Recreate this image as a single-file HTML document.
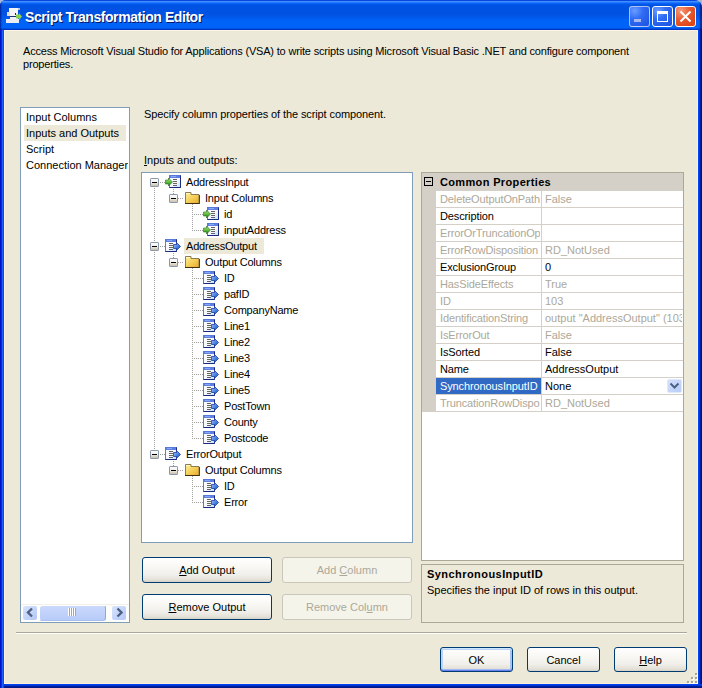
<!DOCTYPE html>
<html><head><meta charset="utf-8">
<style>
*{margin:0;padding:0;box-sizing:border-box}
html,body{width:702px;height:688px;overflow:hidden;background:#A7B6D6}
body{position:relative;font-family:"Liberation Sans",sans-serif;font-size:11px;color:#000}
.a{position:absolute}
.t{position:absolute;white-space:nowrap;line-height:13px}
#win{position:absolute;left:0;top:0;width:702px;height:688px;border-radius:6px 8px 0 0;overflow:hidden;
 background:linear-gradient(to right,#0014C8 0,#0014C8 1px,#0A2CD8 1px,#0A2CD8 2px,#1C62FA 2px,#1C62FA 3px,#0054DC 3px,#0054DC 4px)}
#title{position:absolute;left:0;top:0;width:702px;height:30px;background:linear-gradient(to bottom,#0A46DC 0px,#0A46DC 1px,#3C90FF 1px,#3C90FF 2px,#2478FF 2px,#2478FF 3px,#0A62F4 3px,#0A62F4 4px,#0058EA 4px,#0058EA 5px,#0053E2 5px,#0053E2 6px,#0053E2 6px,#0053E2 7px,#0053E2 7px,#0053E2 8px,#0053E2 8px,#0053E2 9px,#0053E2 9px,#0053E2 10px,#0053E2 10px,#0053E2 11px,#0053E2 11px,#0053E2 12px,#0053E2 12px,#0053E2 13px,#0053E2 13px,#0053E2 14px,#0053E2 14px,#0053E2 15px,#0055E4 15px,#0055E4 16px,#0057E8 16px,#0057E8 17px,#0059EC 17px,#0059EC 18px,#005CF0 18px,#005CF0 19px,#005FF4 19px,#005FF4 20px,#0063F8 20px,#0063F8 21px,#0063F8 21px,#0063F8 22px,#0063F8 22px,#0063F8 23px,#0063F8 23px,#0063F8 24px,#0063F8 24px,#0063F8 25px,#0063F8 25px,#0063F8 26px,#0063F8 26px,#0063F8 27px,#0063F8 27px,#0063F8 28px,#0052E4 28px,#0052E4 29px,#0038C4 29px,#0038C4 30px)}
#rb{position:absolute;left:698px;top:30px;width:4px;height:658px;background:linear-gradient(to right,#0044F0 0,#0044F0 1px,#0038D8 1px,#0038D8 2px,#001C98 2px,#001C98 3px,#001488 3px)}
#bb{position:absolute;left:4px;top:684px;width:698px;height:4px;background:linear-gradient(to bottom,#0040F0 0,#0040F0 1px,#0038D8 1px,#0038D8 2px,#001C98 2px,#001C98 3px,#001888 3px)}
#client{position:absolute;left:4px;top:30px;width:694px;height:654px;background:#ECE9D8;border-left:1px solid #FFF0E0;border-right:1px solid #FFF0D8;border-bottom:1px solid #FFF0D8;border-top:1px solid #FFF4E4}
.ttl{position:absolute;left:25px;top:9px;font-weight:bold;font-size:14px;letter-spacing:-0.43px;color:#fff;line-height:16px;text-shadow:1px 1px 0 #001468;white-space:nowrap}
.tb{position:absolute;top:6px;width:21px;height:21px;border:1px solid #fff;border-radius:3px;
 background:radial-gradient(circle at 25% 20%,#6A9CFF 0,#2F6CF4 40%,#1E50E0 100%)}
.btn{position:absolute;height:26px;border:1px solid #003C74;border-radius:3px;
 background:linear-gradient(to bottom,#FFFFFF 0,#F8F7F3 40%,#F0EFEA 70%,#E3E0D6 92%,#D6D0C5 100%);text-align:center;line-height:24px}
.btn.dis{border-color:#C9C7BA;background:#F5F4EA;color:#ACA899}
u{text-decoration:underline}
.lb{position:absolute;border:1px solid #7F9DB9;background:#fff}

</style></head><body>

<div id="win">
 <div id="title"></div>
 <div id="client"></div>
 <div id="rb"></div>
 <div id="bb"></div>
 <div class="a" style="left:0;top:0;width:2px;height:30px;background:linear-gradient(to right,rgba(0,10,120,0.55) 0,rgba(0,10,120,0.55) 1px,rgba(0,10,120,0.2) 1px,rgba(0,10,120,0.2) 2px)"></div>
 <div class="a" style="left:699px;top:0;width:3px;height:30px;background:linear-gradient(to right,rgba(0,10,120,0.15) 0,rgba(0,10,120,0.15) 1px,rgba(0,10,110,0.6) 1px)"></div>
</div>
<div class="ttl">Script Transformation Editor</div>
<svg class="a" style="left:0;top:0" width="30" height="30" viewBox="0 0 30 30">
 <rect x="9" y="8" width="9" height="8" fill="#F4F4F8"/>
 <rect x="7" y="12" width="3" height="4" fill="#E8D8D0"/>
 <rect x="18" y="8" width="2" height="2" fill="#B8C0D0"/>
 <rect x="10" y="16" width="8" height="3" fill="#F0F0F8"/>
 <rect x="10" y="16" width="6" height="1" fill="#203070"/>
 <rect x="6" y="19" width="13" height="4" fill="#ECECF4"/>
 <rect x="15" y="13" width="1" height="2" fill="#202840"/>
 <path d="M16 14.5 L19 14.5 L19 13 L22 16.5 L19 20 L19 18.5 L16 18.5 Z" fill="#8CD050"/>
</svg>
<div class="tb" style="left:629px;border-color:rgba(255,255,255,0.62)"></div>
<div class="tb" style="left:652px"></div>
<div class="tb" style="left:675px;background:radial-gradient(circle at 25% 20%,#F59C7C 0,#E8582E 45%,#D8400F 100%)"></div>
<div class="a" style="left:634px;top:19px;width:7px;height:3px;background:#A8B8EC"></div>
<div class="a" style="left:657px;top:11px;width:11px;height:11px;border:1px solid #fff;border-top-width:3px"></div>
<svg class="a" style="left:675px;top:6px" width="21" height="21" viewBox="0 0 21 21">
 <path d="M5.5 5.5 L15.5 15.5 M15.5 5.5 L5.5 15.5" stroke="#fff" stroke-width="2" stroke-linecap="butt"/>
</svg>

<div class="t" style="left:23px;top:45px;letter-spacing:-0.177px">Access Microsoft Visual Studio for Applications (VSA) to write scripts using Microsoft Visual Basic .NET and configure component</div>
<div class="t" style="left:23px;top:58px;letter-spacing:-0.177px">properties.</div>
<div class="lb" style="left:20px;top:107px;width:110px;height:516px"></div>
<div class="a" style="left:24px;top:125px;width:102px;height:16px;background:#ECE9D8"></div>
<div class="t" style="left:26px;top:111px;">Input Columns</div>
<div class="t" style="left:26px;top:127px;">Inputs and Outputs</div>
<div class="t" style="left:26px;top:143px;">Script</div>
<div class="t" style="left:26px;top:159px;width:102px;overflow:hidden">Connection Managers</div>
<div class="a" style="left:21px;top:604px;width:108px;height:18px;background:#FDFDFA;border-top:1px solid #F0EFE8"></div>
<div class="a" style="left:22px;top:605px;width:16px;height:16px;background:linear-gradient(135deg,#D8E4FC,#B4C8F8);border:1px solid #fff;border-radius:3px"></div>
<div class="a" style="left:39px;top:605px;width:67px;height:16px;background:linear-gradient(to bottom,#CAD8FC,#B8CCF8);border:1px solid #fff;border-right-color:#8CA8E0;border-bottom-color:#A8C0F0;border-radius:3px"></div>
<div class="a" style="left:111px;top:605px;width:16px;height:16px;background:linear-gradient(135deg,#D8E4FC,#B4C8F8);border:1px solid #fff;border-radius:3px"></div>
<svg class="a" style="left:0;top:600px" width="140" height="30" viewBox="0 0 140 30">
 <path d="M32 8.5 L28 12.5 L32 16.5" fill="none" stroke="#4D6185" stroke-width="2.4"/>
 <path d="M117.5 8.5 L121.5 12.5 L117.5 16.5" fill="none" stroke="#4D6185" stroke-width="2.4"/>
 <rect x="68" y="8" width="1" height="8" fill="#fff"/><rect x="69" y="8" width="1" height="8" fill="#8CA8E8"/>
 <rect x="70" y="8" width="1" height="8" fill="#fff"/><rect x="71" y="8" width="1" height="8" fill="#8CA8E8"/>
 <rect x="72" y="8" width="1" height="8" fill="#fff"/><rect x="73" y="8" width="1" height="8" fill="#8CA8E8"/>
 <rect x="74" y="8" width="1" height="8" fill="#fff"/><rect x="75" y="8" width="1" height="8" fill="#8CA8E8"/>
</svg>

<div class="t" style="left:144px;top:108px;letter-spacing:-0.1px">Specify column properties of the script component.</div>
<div class="t" style="left:144px;top:154px;"><u>I</u>nputs and outputs:</div>
<div class="lb" style="left:141px;top:172px;width:272px;height:371px"></div>
<svg class="a" style="left:0;top:0" width="702" height="688" viewBox="0 0 702 688">
<defs>
 <linearGradient id="boxg" x1="0" y1="0" x2="0" y2="1"><stop offset="0" stop-color="#fff"/><stop offset="0.45" stop-color="#F4F2EC"/><stop offset="1" stop-color="#C4B8A4"/></linearGradient>
 <linearGradient id="docg" x1="0" y1="0" x2="1" y2="1"><stop offset="0" stop-color="#fff"/><stop offset="0.6" stop-color="#F4F6FC"/><stop offset="1" stop-color="#B8E0F8"/></linearGradient>
 <linearGradient id="fold" x1="0" y1="0" x2="1" y2="1"><stop offset="0" stop-color="#FAF0A0"/><stop offset="0.5" stop-color="#F6D058"/><stop offset="1" stop-color="#EAA828"/></linearGradient>
 <linearGradient id="grn" x1="0" y1="0" x2="0" y2="1"><stop offset="0" stop-color="#B8F090"/><stop offset="0.5" stop-color="#60C040"/><stop offset="1" stop-color="#207018"/></linearGradient>
 <linearGradient id="blu" x1="0" y1="0" x2="1" y2="1"><stop offset="0" stop-color="#A8C8FC"/><stop offset="0.5" stop-color="#5088E8"/><stop offset="1" stop-color="#1840B0"/></linearGradient>
 <g id="box"><rect x="0.5" y="0.5" width="8" height="8" rx="0.6" fill="url(#boxg)" stroke="#8898A8"/><rect x="2" y="4" width="5" height="1" fill="#000"/></g>
 <g id="doc"><rect x="0.5" y="1.5" width="11" height="12" fill="url(#docg)" stroke="#5A78D8"/><path d="M11.5 1.5 V13.5 H0.5" fill="none" stroke="#1C2A80"/><rect x="1" y="2" width="10" height="2" fill="#5C80E4"/><rect x="2" y="2" width="5" height="1" fill="#8CA8F0"/>
  <rect x="4" y="5" width="4" height="1" fill="#606060"/><rect x="4" y="7" width="4" height="1" fill="#686858"/><rect x="4" y="9" width="4" height="1" fill="#686858"/><rect x="4" y="11" width="4" height="1" fill="#606070"/></g>
 <g id="out"><use href="#doc"/>
  <path d="M8.5 6.5 H11.5 V4.5 L15.5 8.5 L11.5 12.5 V10.5 H8.5 Z" fill="url(#blu)" stroke="#2040A8" stroke-width="0.8"/></g>
 <g id="in"><use href="#doc" x="4"/>
  <path d="M0.5 6 H3.5 V4 L7.5 8 L3.5 12 V10 H0.5 Z" fill="url(#grn)" stroke="#2A6A20" stroke-width="0.6"/></g>
 <g id="folder"><path d="M1.5 2.5 H7 V4.5 H15 V13.5 H1.5 Z" fill="url(#fold)" stroke="#8C7C50"/><rect x="1" y="13" width="15" height="1" fill="#3C3010"/><rect x="15" y="5" width="1" height="9" fill="#584820"/><rect x="2" y="3" width="4" height="1" fill="#FFF8D0"/></g>
</defs>

<rect x="184" y="238" width="80" height="16" fill="#ECE9D8"/>
<rect x="154" y="188" width="1" height="1" fill="#A0A0A0"/>
<rect x="154" y="190" width="1" height="1" fill="#A0A0A0"/>
<rect x="154" y="192" width="1" height="1" fill="#A0A0A0"/>
<rect x="154" y="194" width="1" height="1" fill="#A0A0A0"/>
<rect x="154" y="196" width="1" height="1" fill="#A0A0A0"/>
<rect x="154" y="198" width="1" height="1" fill="#A0A0A0"/>
<rect x="154" y="200" width="1" height="1" fill="#A0A0A0"/>
<rect x="154" y="202" width="1" height="1" fill="#A0A0A0"/>
<rect x="154" y="204" width="1" height="1" fill="#A0A0A0"/>
<rect x="154" y="206" width="1" height="1" fill="#A0A0A0"/>
<rect x="154" y="208" width="1" height="1" fill="#A0A0A0"/>
<rect x="154" y="210" width="1" height="1" fill="#A0A0A0"/>
<rect x="154" y="212" width="1" height="1" fill="#A0A0A0"/>
<rect x="154" y="214" width="1" height="1" fill="#A0A0A0"/>
<rect x="154" y="216" width="1" height="1" fill="#A0A0A0"/>
<rect x="154" y="218" width="1" height="1" fill="#A0A0A0"/>
<rect x="154" y="220" width="1" height="1" fill="#A0A0A0"/>
<rect x="154" y="222" width="1" height="1" fill="#A0A0A0"/>
<rect x="154" y="224" width="1" height="1" fill="#A0A0A0"/>
<rect x="154" y="226" width="1" height="1" fill="#A0A0A0"/>
<rect x="154" y="228" width="1" height="1" fill="#A0A0A0"/>
<rect x="154" y="230" width="1" height="1" fill="#A0A0A0"/>
<rect x="154" y="232" width="1" height="1" fill="#A0A0A0"/>
<rect x="154" y="234" width="1" height="1" fill="#A0A0A0"/>
<rect x="154" y="236" width="1" height="1" fill="#A0A0A0"/>
<rect x="154" y="238" width="1" height="1" fill="#A0A0A0"/>
<rect x="154" y="240" width="1" height="1" fill="#A0A0A0"/>
<rect x="154" y="242" width="1" height="1" fill="#A0A0A0"/>
<rect x="154" y="244" width="1" height="1" fill="#A0A0A0"/>
<rect x="154" y="246" width="1" height="1" fill="#A0A0A0"/>
<rect x="154" y="248" width="1" height="1" fill="#A0A0A0"/>
<rect x="154" y="250" width="1" height="1" fill="#A0A0A0"/>
<rect x="154" y="252" width="1" height="1" fill="#A0A0A0"/>
<rect x="154" y="254" width="1" height="1" fill="#A0A0A0"/>
<rect x="154" y="256" width="1" height="1" fill="#A0A0A0"/>
<rect x="154" y="258" width="1" height="1" fill="#A0A0A0"/>
<rect x="154" y="260" width="1" height="1" fill="#A0A0A0"/>
<rect x="154" y="262" width="1" height="1" fill="#A0A0A0"/>
<rect x="154" y="264" width="1" height="1" fill="#A0A0A0"/>
<rect x="154" y="266" width="1" height="1" fill="#A0A0A0"/>
<rect x="154" y="268" width="1" height="1" fill="#A0A0A0"/>
<rect x="154" y="270" width="1" height="1" fill="#A0A0A0"/>
<rect x="154" y="272" width="1" height="1" fill="#A0A0A0"/>
<rect x="154" y="274" width="1" height="1" fill="#A0A0A0"/>
<rect x="154" y="276" width="1" height="1" fill="#A0A0A0"/>
<rect x="154" y="278" width="1" height="1" fill="#A0A0A0"/>
<rect x="154" y="280" width="1" height="1" fill="#A0A0A0"/>
<rect x="154" y="282" width="1" height="1" fill="#A0A0A0"/>
<rect x="154" y="284" width="1" height="1" fill="#A0A0A0"/>
<rect x="154" y="286" width="1" height="1" fill="#A0A0A0"/>
<rect x="154" y="288" width="1" height="1" fill="#A0A0A0"/>
<rect x="154" y="290" width="1" height="1" fill="#A0A0A0"/>
<rect x="154" y="292" width="1" height="1" fill="#A0A0A0"/>
<rect x="154" y="294" width="1" height="1" fill="#A0A0A0"/>
<rect x="154" y="296" width="1" height="1" fill="#A0A0A0"/>
<rect x="154" y="298" width="1" height="1" fill="#A0A0A0"/>
<rect x="154" y="300" width="1" height="1" fill="#A0A0A0"/>
<rect x="154" y="302" width="1" height="1" fill="#A0A0A0"/>
<rect x="154" y="304" width="1" height="1" fill="#A0A0A0"/>
<rect x="154" y="306" width="1" height="1" fill="#A0A0A0"/>
<rect x="154" y="308" width="1" height="1" fill="#A0A0A0"/>
<rect x="154" y="310" width="1" height="1" fill="#A0A0A0"/>
<rect x="154" y="312" width="1" height="1" fill="#A0A0A0"/>
<rect x="154" y="314" width="1" height="1" fill="#A0A0A0"/>
<rect x="154" y="316" width="1" height="1" fill="#A0A0A0"/>
<rect x="154" y="318" width="1" height="1" fill="#A0A0A0"/>
<rect x="154" y="320" width="1" height="1" fill="#A0A0A0"/>
<rect x="154" y="322" width="1" height="1" fill="#A0A0A0"/>
<rect x="154" y="324" width="1" height="1" fill="#A0A0A0"/>
<rect x="154" y="326" width="1" height="1" fill="#A0A0A0"/>
<rect x="154" y="328" width="1" height="1" fill="#A0A0A0"/>
<rect x="154" y="330" width="1" height="1" fill="#A0A0A0"/>
<rect x="154" y="332" width="1" height="1" fill="#A0A0A0"/>
<rect x="154" y="334" width="1" height="1" fill="#A0A0A0"/>
<rect x="154" y="336" width="1" height="1" fill="#A0A0A0"/>
<rect x="154" y="338" width="1" height="1" fill="#A0A0A0"/>
<rect x="154" y="340" width="1" height="1" fill="#A0A0A0"/>
<rect x="154" y="342" width="1" height="1" fill="#A0A0A0"/>
<rect x="154" y="344" width="1" height="1" fill="#A0A0A0"/>
<rect x="154" y="346" width="1" height="1" fill="#A0A0A0"/>
<rect x="154" y="348" width="1" height="1" fill="#A0A0A0"/>
<rect x="154" y="350" width="1" height="1" fill="#A0A0A0"/>
<rect x="154" y="352" width="1" height="1" fill="#A0A0A0"/>
<rect x="154" y="354" width="1" height="1" fill="#A0A0A0"/>
<rect x="154" y="356" width="1" height="1" fill="#A0A0A0"/>
<rect x="154" y="358" width="1" height="1" fill="#A0A0A0"/>
<rect x="154" y="360" width="1" height="1" fill="#A0A0A0"/>
<rect x="154" y="362" width="1" height="1" fill="#A0A0A0"/>
<rect x="154" y="364" width="1" height="1" fill="#A0A0A0"/>
<rect x="154" y="366" width="1" height="1" fill="#A0A0A0"/>
<rect x="154" y="368" width="1" height="1" fill="#A0A0A0"/>
<rect x="154" y="370" width="1" height="1" fill="#A0A0A0"/>
<rect x="154" y="372" width="1" height="1" fill="#A0A0A0"/>
<rect x="154" y="374" width="1" height="1" fill="#A0A0A0"/>
<rect x="154" y="376" width="1" height="1" fill="#A0A0A0"/>
<rect x="154" y="378" width="1" height="1" fill="#A0A0A0"/>
<rect x="154" y="380" width="1" height="1" fill="#A0A0A0"/>
<rect x="154" y="382" width="1" height="1" fill="#A0A0A0"/>
<rect x="154" y="384" width="1" height="1" fill="#A0A0A0"/>
<rect x="154" y="386" width="1" height="1" fill="#A0A0A0"/>
<rect x="154" y="388" width="1" height="1" fill="#A0A0A0"/>
<rect x="154" y="390" width="1" height="1" fill="#A0A0A0"/>
<rect x="154" y="392" width="1" height="1" fill="#A0A0A0"/>
<rect x="154" y="394" width="1" height="1" fill="#A0A0A0"/>
<rect x="154" y="396" width="1" height="1" fill="#A0A0A0"/>
<rect x="154" y="398" width="1" height="1" fill="#A0A0A0"/>
<rect x="154" y="400" width="1" height="1" fill="#A0A0A0"/>
<rect x="154" y="402" width="1" height="1" fill="#A0A0A0"/>
<rect x="154" y="404" width="1" height="1" fill="#A0A0A0"/>
<rect x="154" y="406" width="1" height="1" fill="#A0A0A0"/>
<rect x="154" y="408" width="1" height="1" fill="#A0A0A0"/>
<rect x="154" y="410" width="1" height="1" fill="#A0A0A0"/>
<rect x="154" y="412" width="1" height="1" fill="#A0A0A0"/>
<rect x="154" y="414" width="1" height="1" fill="#A0A0A0"/>
<rect x="154" y="416" width="1" height="1" fill="#A0A0A0"/>
<rect x="154" y="418" width="1" height="1" fill="#A0A0A0"/>
<rect x="154" y="420" width="1" height="1" fill="#A0A0A0"/>
<rect x="154" y="422" width="1" height="1" fill="#A0A0A0"/>
<rect x="154" y="424" width="1" height="1" fill="#A0A0A0"/>
<rect x="154" y="426" width="1" height="1" fill="#A0A0A0"/>
<rect x="154" y="428" width="1" height="1" fill="#A0A0A0"/>
<rect x="154" y="430" width="1" height="1" fill="#A0A0A0"/>
<rect x="154" y="432" width="1" height="1" fill="#A0A0A0"/>
<rect x="154" y="434" width="1" height="1" fill="#A0A0A0"/>
<rect x="154" y="436" width="1" height="1" fill="#A0A0A0"/>
<rect x="154" y="438" width="1" height="1" fill="#A0A0A0"/>
<rect x="154" y="440" width="1" height="1" fill="#A0A0A0"/>
<rect x="154" y="442" width="1" height="1" fill="#A0A0A0"/>
<rect x="154" y="444" width="1" height="1" fill="#A0A0A0"/>
<rect x="154" y="446" width="1" height="1" fill="#A0A0A0"/>
<rect x="154" y="448" width="1" height="1" fill="#A0A0A0"/>
<rect x="173" y="189" width="1" height="1" fill="#A0A0A0"/>
<rect x="173" y="191" width="1" height="1" fill="#A0A0A0"/>
<rect x="173" y="193" width="1" height="1" fill="#A0A0A0"/>
<rect x="192" y="204" width="1" height="1" fill="#A0A0A0"/>
<rect x="192" y="206" width="1" height="1" fill="#A0A0A0"/>
<rect x="192" y="208" width="1" height="1" fill="#A0A0A0"/>
<rect x="192" y="210" width="1" height="1" fill="#A0A0A0"/>
<rect x="192" y="212" width="1" height="1" fill="#A0A0A0"/>
<rect x="192" y="214" width="1" height="1" fill="#A0A0A0"/>
<rect x="192" y="216" width="1" height="1" fill="#A0A0A0"/>
<rect x="192" y="218" width="1" height="1" fill="#A0A0A0"/>
<rect x="192" y="220" width="1" height="1" fill="#A0A0A0"/>
<rect x="192" y="222" width="1" height="1" fill="#A0A0A0"/>
<rect x="192" y="224" width="1" height="1" fill="#A0A0A0"/>
<rect x="192" y="226" width="1" height="1" fill="#A0A0A0"/>
<rect x="192" y="228" width="1" height="1" fill="#A0A0A0"/>
<rect x="192" y="230" width="1" height="1" fill="#A0A0A0"/>
<rect x="173" y="253" width="1" height="1" fill="#A0A0A0"/>
<rect x="173" y="255" width="1" height="1" fill="#A0A0A0"/>
<rect x="173" y="257" width="1" height="1" fill="#A0A0A0"/>
<rect x="192" y="268" width="1" height="1" fill="#A0A0A0"/>
<rect x="192" y="270" width="1" height="1" fill="#A0A0A0"/>
<rect x="192" y="272" width="1" height="1" fill="#A0A0A0"/>
<rect x="192" y="274" width="1" height="1" fill="#A0A0A0"/>
<rect x="192" y="276" width="1" height="1" fill="#A0A0A0"/>
<rect x="192" y="278" width="1" height="1" fill="#A0A0A0"/>
<rect x="192" y="280" width="1" height="1" fill="#A0A0A0"/>
<rect x="192" y="282" width="1" height="1" fill="#A0A0A0"/>
<rect x="192" y="284" width="1" height="1" fill="#A0A0A0"/>
<rect x="192" y="286" width="1" height="1" fill="#A0A0A0"/>
<rect x="192" y="288" width="1" height="1" fill="#A0A0A0"/>
<rect x="192" y="290" width="1" height="1" fill="#A0A0A0"/>
<rect x="192" y="292" width="1" height="1" fill="#A0A0A0"/>
<rect x="192" y="294" width="1" height="1" fill="#A0A0A0"/>
<rect x="192" y="296" width="1" height="1" fill="#A0A0A0"/>
<rect x="192" y="298" width="1" height="1" fill="#A0A0A0"/>
<rect x="192" y="300" width="1" height="1" fill="#A0A0A0"/>
<rect x="192" y="302" width="1" height="1" fill="#A0A0A0"/>
<rect x="192" y="304" width="1" height="1" fill="#A0A0A0"/>
<rect x="192" y="306" width="1" height="1" fill="#A0A0A0"/>
<rect x="192" y="308" width="1" height="1" fill="#A0A0A0"/>
<rect x="192" y="310" width="1" height="1" fill="#A0A0A0"/>
<rect x="192" y="312" width="1" height="1" fill="#A0A0A0"/>
<rect x="192" y="314" width="1" height="1" fill="#A0A0A0"/>
<rect x="192" y="316" width="1" height="1" fill="#A0A0A0"/>
<rect x="192" y="318" width="1" height="1" fill="#A0A0A0"/>
<rect x="192" y="320" width="1" height="1" fill="#A0A0A0"/>
<rect x="192" y="322" width="1" height="1" fill="#A0A0A0"/>
<rect x="192" y="324" width="1" height="1" fill="#A0A0A0"/>
<rect x="192" y="326" width="1" height="1" fill="#A0A0A0"/>
<rect x="192" y="328" width="1" height="1" fill="#A0A0A0"/>
<rect x="192" y="330" width="1" height="1" fill="#A0A0A0"/>
<rect x="192" y="332" width="1" height="1" fill="#A0A0A0"/>
<rect x="192" y="334" width="1" height="1" fill="#A0A0A0"/>
<rect x="192" y="336" width="1" height="1" fill="#A0A0A0"/>
<rect x="192" y="338" width="1" height="1" fill="#A0A0A0"/>
<rect x="192" y="340" width="1" height="1" fill="#A0A0A0"/>
<rect x="192" y="342" width="1" height="1" fill="#A0A0A0"/>
<rect x="192" y="344" width="1" height="1" fill="#A0A0A0"/>
<rect x="192" y="346" width="1" height="1" fill="#A0A0A0"/>
<rect x="192" y="348" width="1" height="1" fill="#A0A0A0"/>
<rect x="192" y="350" width="1" height="1" fill="#A0A0A0"/>
<rect x="192" y="352" width="1" height="1" fill="#A0A0A0"/>
<rect x="192" y="354" width="1" height="1" fill="#A0A0A0"/>
<rect x="192" y="356" width="1" height="1" fill="#A0A0A0"/>
<rect x="192" y="358" width="1" height="1" fill="#A0A0A0"/>
<rect x="192" y="360" width="1" height="1" fill="#A0A0A0"/>
<rect x="192" y="362" width="1" height="1" fill="#A0A0A0"/>
<rect x="192" y="364" width="1" height="1" fill="#A0A0A0"/>
<rect x="192" y="366" width="1" height="1" fill="#A0A0A0"/>
<rect x="192" y="368" width="1" height="1" fill="#A0A0A0"/>
<rect x="192" y="370" width="1" height="1" fill="#A0A0A0"/>
<rect x="192" y="372" width="1" height="1" fill="#A0A0A0"/>
<rect x="192" y="374" width="1" height="1" fill="#A0A0A0"/>
<rect x="192" y="376" width="1" height="1" fill="#A0A0A0"/>
<rect x="192" y="378" width="1" height="1" fill="#A0A0A0"/>
<rect x="192" y="380" width="1" height="1" fill="#A0A0A0"/>
<rect x="192" y="382" width="1" height="1" fill="#A0A0A0"/>
<rect x="192" y="384" width="1" height="1" fill="#A0A0A0"/>
<rect x="192" y="386" width="1" height="1" fill="#A0A0A0"/>
<rect x="192" y="388" width="1" height="1" fill="#A0A0A0"/>
<rect x="192" y="390" width="1" height="1" fill="#A0A0A0"/>
<rect x="192" y="392" width="1" height="1" fill="#A0A0A0"/>
<rect x="192" y="394" width="1" height="1" fill="#A0A0A0"/>
<rect x="192" y="396" width="1" height="1" fill="#A0A0A0"/>
<rect x="192" y="398" width="1" height="1" fill="#A0A0A0"/>
<rect x="192" y="400" width="1" height="1" fill="#A0A0A0"/>
<rect x="192" y="402" width="1" height="1" fill="#A0A0A0"/>
<rect x="192" y="404" width="1" height="1" fill="#A0A0A0"/>
<rect x="192" y="406" width="1" height="1" fill="#A0A0A0"/>
<rect x="192" y="408" width="1" height="1" fill="#A0A0A0"/>
<rect x="192" y="410" width="1" height="1" fill="#A0A0A0"/>
<rect x="192" y="412" width="1" height="1" fill="#A0A0A0"/>
<rect x="192" y="414" width="1" height="1" fill="#A0A0A0"/>
<rect x="192" y="416" width="1" height="1" fill="#A0A0A0"/>
<rect x="192" y="418" width="1" height="1" fill="#A0A0A0"/>
<rect x="192" y="420" width="1" height="1" fill="#A0A0A0"/>
<rect x="192" y="422" width="1" height="1" fill="#A0A0A0"/>
<rect x="192" y="424" width="1" height="1" fill="#A0A0A0"/>
<rect x="192" y="426" width="1" height="1" fill="#A0A0A0"/>
<rect x="192" y="428" width="1" height="1" fill="#A0A0A0"/>
<rect x="192" y="430" width="1" height="1" fill="#A0A0A0"/>
<rect x="192" y="432" width="1" height="1" fill="#A0A0A0"/>
<rect x="192" y="434" width="1" height="1" fill="#A0A0A0"/>
<rect x="192" y="436" width="1" height="1" fill="#A0A0A0"/>
<rect x="192" y="438" width="1" height="1" fill="#A0A0A0"/>
<rect x="173" y="461" width="1" height="1" fill="#A0A0A0"/>
<rect x="173" y="463" width="1" height="1" fill="#A0A0A0"/>
<rect x="173" y="465" width="1" height="1" fill="#A0A0A0"/>
<rect x="192" y="476" width="1" height="1" fill="#A0A0A0"/>
<rect x="192" y="478" width="1" height="1" fill="#A0A0A0"/>
<rect x="192" y="480" width="1" height="1" fill="#A0A0A0"/>
<rect x="192" y="482" width="1" height="1" fill="#A0A0A0"/>
<rect x="192" y="484" width="1" height="1" fill="#A0A0A0"/>
<rect x="192" y="486" width="1" height="1" fill="#A0A0A0"/>
<rect x="192" y="488" width="1" height="1" fill="#A0A0A0"/>
<rect x="192" y="490" width="1" height="1" fill="#A0A0A0"/>
<rect x="192" y="492" width="1" height="1" fill="#A0A0A0"/>
<rect x="192" y="494" width="1" height="1" fill="#A0A0A0"/>
<rect x="192" y="496" width="1" height="1" fill="#A0A0A0"/>
<rect x="192" y="498" width="1" height="1" fill="#A0A0A0"/>
<rect x="192" y="500" width="1" height="1" fill="#A0A0A0"/>
<rect x="192" y="502" width="1" height="1" fill="#A0A0A0"/>
<rect x="160" y="182" width="1" height="1" fill="#A0A0A0"/>
<rect x="162" y="182" width="1" height="1" fill="#A0A0A0"/>
<rect x="164" y="182" width="1" height="1" fill="#A0A0A0"/>
<use href="#box" x="150" y="178"/>
<use href="#in" x="165" y="174"/>
<rect x="178" y="198" width="1" height="1" fill="#A0A0A0"/>
<rect x="180" y="198" width="1" height="1" fill="#A0A0A0"/>
<rect x="182" y="198" width="1" height="1" fill="#A0A0A0"/>
<use href="#box" x="169" y="194"/>
<use href="#folder" x="184" y="190"/>
<rect x="192" y="214" width="1" height="1" fill="#A0A0A0"/>
<rect x="194" y="214" width="1" height="1" fill="#A0A0A0"/>
<rect x="196" y="214" width="1" height="1" fill="#A0A0A0"/>
<rect x="198" y="214" width="1" height="1" fill="#A0A0A0"/>
<rect x="200" y="214" width="1" height="1" fill="#A0A0A0"/>
<rect x="202" y="214" width="1" height="1" fill="#A0A0A0"/>
<use href="#in" x="203" y="206"/>
<rect x="192" y="230" width="1" height="1" fill="#A0A0A0"/>
<rect x="194" y="230" width="1" height="1" fill="#A0A0A0"/>
<rect x="196" y="230" width="1" height="1" fill="#A0A0A0"/>
<rect x="198" y="230" width="1" height="1" fill="#A0A0A0"/>
<rect x="200" y="230" width="1" height="1" fill="#A0A0A0"/>
<rect x="202" y="230" width="1" height="1" fill="#A0A0A0"/>
<use href="#in" x="203" y="222"/>
<rect x="160" y="246" width="1" height="1" fill="#A0A0A0"/>
<rect x="162" y="246" width="1" height="1" fill="#A0A0A0"/>
<rect x="164" y="246" width="1" height="1" fill="#A0A0A0"/>
<use href="#box" x="150" y="242"/>
<use href="#out" x="165" y="238"/>
<rect x="178" y="262" width="1" height="1" fill="#A0A0A0"/>
<rect x="180" y="262" width="1" height="1" fill="#A0A0A0"/>
<rect x="182" y="262" width="1" height="1" fill="#A0A0A0"/>
<use href="#box" x="169" y="258"/>
<use href="#folder" x="184" y="254"/>
<rect x="192" y="278" width="1" height="1" fill="#A0A0A0"/>
<rect x="194" y="278" width="1" height="1" fill="#A0A0A0"/>
<rect x="196" y="278" width="1" height="1" fill="#A0A0A0"/>
<rect x="198" y="278" width="1" height="1" fill="#A0A0A0"/>
<rect x="200" y="278" width="1" height="1" fill="#A0A0A0"/>
<rect x="202" y="278" width="1" height="1" fill="#A0A0A0"/>
<use href="#out" x="203" y="270"/>
<rect x="192" y="294" width="1" height="1" fill="#A0A0A0"/>
<rect x="194" y="294" width="1" height="1" fill="#A0A0A0"/>
<rect x="196" y="294" width="1" height="1" fill="#A0A0A0"/>
<rect x="198" y="294" width="1" height="1" fill="#A0A0A0"/>
<rect x="200" y="294" width="1" height="1" fill="#A0A0A0"/>
<rect x="202" y="294" width="1" height="1" fill="#A0A0A0"/>
<use href="#out" x="203" y="286"/>
<rect x="192" y="310" width="1" height="1" fill="#A0A0A0"/>
<rect x="194" y="310" width="1" height="1" fill="#A0A0A0"/>
<rect x="196" y="310" width="1" height="1" fill="#A0A0A0"/>
<rect x="198" y="310" width="1" height="1" fill="#A0A0A0"/>
<rect x="200" y="310" width="1" height="1" fill="#A0A0A0"/>
<rect x="202" y="310" width="1" height="1" fill="#A0A0A0"/>
<use href="#out" x="203" y="302"/>
<rect x="192" y="326" width="1" height="1" fill="#A0A0A0"/>
<rect x="194" y="326" width="1" height="1" fill="#A0A0A0"/>
<rect x="196" y="326" width="1" height="1" fill="#A0A0A0"/>
<rect x="198" y="326" width="1" height="1" fill="#A0A0A0"/>
<rect x="200" y="326" width="1" height="1" fill="#A0A0A0"/>
<rect x="202" y="326" width="1" height="1" fill="#A0A0A0"/>
<use href="#out" x="203" y="318"/>
<rect x="192" y="342" width="1" height="1" fill="#A0A0A0"/>
<rect x="194" y="342" width="1" height="1" fill="#A0A0A0"/>
<rect x="196" y="342" width="1" height="1" fill="#A0A0A0"/>
<rect x="198" y="342" width="1" height="1" fill="#A0A0A0"/>
<rect x="200" y="342" width="1" height="1" fill="#A0A0A0"/>
<rect x="202" y="342" width="1" height="1" fill="#A0A0A0"/>
<use href="#out" x="203" y="334"/>
<rect x="192" y="358" width="1" height="1" fill="#A0A0A0"/>
<rect x="194" y="358" width="1" height="1" fill="#A0A0A0"/>
<rect x="196" y="358" width="1" height="1" fill="#A0A0A0"/>
<rect x="198" y="358" width="1" height="1" fill="#A0A0A0"/>
<rect x="200" y="358" width="1" height="1" fill="#A0A0A0"/>
<rect x="202" y="358" width="1" height="1" fill="#A0A0A0"/>
<use href="#out" x="203" y="350"/>
<rect x="192" y="374" width="1" height="1" fill="#A0A0A0"/>
<rect x="194" y="374" width="1" height="1" fill="#A0A0A0"/>
<rect x="196" y="374" width="1" height="1" fill="#A0A0A0"/>
<rect x="198" y="374" width="1" height="1" fill="#A0A0A0"/>
<rect x="200" y="374" width="1" height="1" fill="#A0A0A0"/>
<rect x="202" y="374" width="1" height="1" fill="#A0A0A0"/>
<use href="#out" x="203" y="366"/>
<rect x="192" y="390" width="1" height="1" fill="#A0A0A0"/>
<rect x="194" y="390" width="1" height="1" fill="#A0A0A0"/>
<rect x="196" y="390" width="1" height="1" fill="#A0A0A0"/>
<rect x="198" y="390" width="1" height="1" fill="#A0A0A0"/>
<rect x="200" y="390" width="1" height="1" fill="#A0A0A0"/>
<rect x="202" y="390" width="1" height="1" fill="#A0A0A0"/>
<use href="#out" x="203" y="382"/>
<rect x="192" y="406" width="1" height="1" fill="#A0A0A0"/>
<rect x="194" y="406" width="1" height="1" fill="#A0A0A0"/>
<rect x="196" y="406" width="1" height="1" fill="#A0A0A0"/>
<rect x="198" y="406" width="1" height="1" fill="#A0A0A0"/>
<rect x="200" y="406" width="1" height="1" fill="#A0A0A0"/>
<rect x="202" y="406" width="1" height="1" fill="#A0A0A0"/>
<use href="#out" x="203" y="398"/>
<rect x="192" y="422" width="1" height="1" fill="#A0A0A0"/>
<rect x="194" y="422" width="1" height="1" fill="#A0A0A0"/>
<rect x="196" y="422" width="1" height="1" fill="#A0A0A0"/>
<rect x="198" y="422" width="1" height="1" fill="#A0A0A0"/>
<rect x="200" y="422" width="1" height="1" fill="#A0A0A0"/>
<rect x="202" y="422" width="1" height="1" fill="#A0A0A0"/>
<use href="#out" x="203" y="414"/>
<rect x="192" y="438" width="1" height="1" fill="#A0A0A0"/>
<rect x="194" y="438" width="1" height="1" fill="#A0A0A0"/>
<rect x="196" y="438" width="1" height="1" fill="#A0A0A0"/>
<rect x="198" y="438" width="1" height="1" fill="#A0A0A0"/>
<rect x="200" y="438" width="1" height="1" fill="#A0A0A0"/>
<rect x="202" y="438" width="1" height="1" fill="#A0A0A0"/>
<use href="#out" x="203" y="430"/>
<rect x="160" y="454" width="1" height="1" fill="#A0A0A0"/>
<rect x="162" y="454" width="1" height="1" fill="#A0A0A0"/>
<rect x="164" y="454" width="1" height="1" fill="#A0A0A0"/>
<use href="#box" x="150" y="450"/>
<use href="#out" x="165" y="446"/>
<rect x="178" y="470" width="1" height="1" fill="#A0A0A0"/>
<rect x="180" y="470" width="1" height="1" fill="#A0A0A0"/>
<rect x="182" y="470" width="1" height="1" fill="#A0A0A0"/>
<use href="#box" x="169" y="466"/>
<use href="#folder" x="184" y="462"/>
<rect x="192" y="486" width="1" height="1" fill="#A0A0A0"/>
<rect x="194" y="486" width="1" height="1" fill="#A0A0A0"/>
<rect x="196" y="486" width="1" height="1" fill="#A0A0A0"/>
<rect x="198" y="486" width="1" height="1" fill="#A0A0A0"/>
<rect x="200" y="486" width="1" height="1" fill="#A0A0A0"/>
<rect x="202" y="486" width="1" height="1" fill="#A0A0A0"/>
<use href="#out" x="203" y="478"/>
<rect x="192" y="502" width="1" height="1" fill="#A0A0A0"/>
<rect x="194" y="502" width="1" height="1" fill="#A0A0A0"/>
<rect x="196" y="502" width="1" height="1" fill="#A0A0A0"/>
<rect x="198" y="502" width="1" height="1" fill="#A0A0A0"/>
<rect x="200" y="502" width="1" height="1" fill="#A0A0A0"/>
<rect x="202" y="502" width="1" height="1" fill="#A0A0A0"/>
<use href="#out" x="203" y="494"/>
</svg>
<div class="t" style="left:186px;top:176px;letter-spacing:-0.2px">AddressInput</div>
<div class="t" style="left:205px;top:192px;letter-spacing:-0.2px">Input Columns</div>
<div class="t" style="left:224px;top:208px;letter-spacing:-0.2px">id</div>
<div class="t" style="left:224px;top:224px;letter-spacing:-0.2px">inputAddress</div>
<div class="t" style="left:186px;top:240px;letter-spacing:-0.2px">AddressOutput</div>
<div class="t" style="left:205px;top:256px;letter-spacing:-0.2px">Output Columns</div>
<div class="t" style="left:224px;top:272px;letter-spacing:-0.2px">ID</div>
<div class="t" style="left:224px;top:288px;letter-spacing:-0.2px">pafID</div>
<div class="t" style="left:224px;top:304px;letter-spacing:-0.2px">CompanyName</div>
<div class="t" style="left:224px;top:320px;letter-spacing:-0.2px">Line1</div>
<div class="t" style="left:224px;top:336px;letter-spacing:-0.2px">Line2</div>
<div class="t" style="left:224px;top:352px;letter-spacing:-0.2px">Line3</div>
<div class="t" style="left:224px;top:368px;letter-spacing:-0.2px">Line4</div>
<div class="t" style="left:224px;top:384px;letter-spacing:-0.2px">Line5</div>
<div class="t" style="left:224px;top:400px;letter-spacing:-0.2px">PostTown</div>
<div class="t" style="left:224px;top:416px;letter-spacing:-0.2px">County</div>
<div class="t" style="left:224px;top:432px;letter-spacing:-0.2px">Postcode</div>
<div class="t" style="left:186px;top:448px;letter-spacing:-0.2px">ErrorOutput</div>
<div class="t" style="left:205px;top:464px;letter-spacing:-0.2px">Output Columns</div>
<div class="t" style="left:224px;top:480px;letter-spacing:-0.2px">ID</div>
<div class="t" style="left:224px;top:496px;letter-spacing:-0.2px">Error</div>
<div class="a" style="left:421px;top:172px;width:263px;height:389px;border:1px solid #ACA899;background:#fff"></div>
<div class="a" style="left:422px;top:173px;width:261px;height:18px;background:#D4D0C8"></div>
<div class="a" style="left:422px;top:191px;width:14px;height:221px;background:#D4D0C8"></div>
<div class="a" style="left:424px;top:177px;width:9px;height:9px;border:1px solid #000"></div>
<div class="a" style="left:426px;top:181px;width:5px;height:1px;background:#000"></div>
<div class="t" style="left:440px;top:176px;font-weight:bold;letter-spacing:0.35px">Common Properties</div>
<div class="a" style="left:436px;top:207px;width:247px;height:1px;background:#D4D0C8"></div>
<div class="a" style="left:436px;top:224px;width:247px;height:1px;background:#D4D0C8"></div>
<div class="a" style="left:436px;top:241px;width:247px;height:1px;background:#D4D0C8"></div>
<div class="a" style="left:436px;top:258px;width:247px;height:1px;background:#D4D0C8"></div>
<div class="a" style="left:436px;top:275px;width:247px;height:1px;background:#D4D0C8"></div>
<div class="a" style="left:436px;top:292px;width:247px;height:1px;background:#D4D0C8"></div>
<div class="a" style="left:436px;top:309px;width:247px;height:1px;background:#D4D0C8"></div>
<div class="a" style="left:436px;top:326px;width:247px;height:1px;background:#D4D0C8"></div>
<div class="a" style="left:436px;top:343px;width:247px;height:1px;background:#D4D0C8"></div>
<div class="a" style="left:436px;top:360px;width:247px;height:1px;background:#D4D0C8"></div>
<div class="a" style="left:436px;top:377px;width:247px;height:1px;background:#D4D0C8"></div>
<div class="a" style="left:436px;top:394px;width:247px;height:1px;background:#D4D0C8"></div>
<div class="a" style="left:422px;top:411px;width:261px;height:1px;background:#D4D0C8"></div>
<div class="a" style="left:541px;top:191px;width:1px;height:220px;background:#D4D0C8"></div>
<div class="a" style="left:667px;top:379px;width:15px;height:14px;background:linear-gradient(135deg,#D4E0FC,#B8CCF8);border:1px solid #E0E8FC;border-radius:2px"></div>
<svg class="a" style="left:667px;top:379px" width="15" height="14" viewBox="0 0 15 14"><path d="M3.5 4.5 L7.5 8.5 L11.5 4.5" fill="none" stroke="#4D6185" stroke-width="2"/></svg>

<div class="t" style="left:440px;top:193px;width:100px;overflow:hidden;letter-spacing:-0.12px;color:#ACA899">DeleteOutputOnPath</div>
<div class="t" style="left:545px;top:193px;width:137px;overflow:hidden;color:#ACA899">False</div>
<div class="t" style="left:440px;top:210px;width:100px;overflow:hidden;letter-spacing:-0.12px;">Description</div>
<div class="t" style="left:440px;top:227px;width:100px;overflow:hidden;letter-spacing:-0.12px;color:#ACA899">ErrorOrTruncationOp</div>
<div class="t" style="left:440px;top:244px;width:100px;overflow:hidden;letter-spacing:-0.12px;color:#ACA899">ErrorRowDisposition</div>
<div class="t" style="left:545px;top:244px;width:137px;overflow:hidden;color:#ACA899">RD_NotUsed</div>
<div class="t" style="left:440px;top:261px;width:100px;overflow:hidden;letter-spacing:-0.12px;">ExclusionGroup</div>
<div class="t" style="left:545px;top:261px;width:137px;overflow:hidden;">0</div>
<div class="t" style="left:440px;top:278px;width:100px;overflow:hidden;letter-spacing:-0.12px;color:#ACA899">HasSideEffects</div>
<div class="t" style="left:545px;top:278px;width:137px;overflow:hidden;color:#ACA899">True</div>
<div class="t" style="left:440px;top:295px;width:100px;overflow:hidden;letter-spacing:-0.12px;color:#ACA899">ID</div>
<div class="t" style="left:545px;top:295px;width:137px;overflow:hidden;color:#ACA899">103</div>
<div class="t" style="left:440px;top:312px;width:100px;overflow:hidden;letter-spacing:-0.12px;color:#ACA899">IdentificationString</div>
<div class="t" style="left:545px;top:312px;width:137px;overflow:hidden;color:#ACA899">output &quot;AddressOutput&quot; (103)</div>
<div class="t" style="left:440px;top:329px;width:100px;overflow:hidden;letter-spacing:-0.12px;color:#ACA899">IsErrorOut</div>
<div class="t" style="left:545px;top:329px;width:137px;overflow:hidden;color:#ACA899">False</div>
<div class="t" style="left:440px;top:346px;width:100px;overflow:hidden;letter-spacing:-0.12px;">IsSorted</div>
<div class="t" style="left:545px;top:346px;width:137px;overflow:hidden;">False</div>
<div class="t" style="left:440px;top:363px;width:100px;overflow:hidden;letter-spacing:-0.12px;">Name</div>
<div class="t" style="left:545px;top:363px;width:137px;overflow:hidden;">AddressOutput</div>
<div class="a" style="left:436px;top:378px;width:105px;height:16px;background:#316AC5"></div>
<div class="t" style="left:440px;top:380px;color:#fff;width:100px;overflow:hidden;letter-spacing:-0.12px">SynchronousInputID</div>
<div class="t" style="left:545px;top:380px;width:137px;overflow:hidden;">None</div>
<div class="t" style="left:440px;top:397px;width:100px;overflow:hidden;letter-spacing:-0.12px;color:#ACA899">TruncationRowDisposition</div>
<div class="t" style="left:545px;top:397px;width:137px;overflow:hidden;color:#ACA899">RD_NotUsed</div>
<div class="a" style="left:421px;top:564px;width:263px;height:59px;border:1px solid #ACA899;background:#ECE9D8"></div>
<div class="t" style="left:427px;top:568px;font-weight:bold;letter-spacing:0.44px">SynchronousInputID</div>
<div class="t" style="left:427px;top:584px">Specifies the input ID of rows in this output.</div>
<div class="btn" style="left:142px;top:557px;width:130px"><u>A</u>dd Output</div>
<div class="btn dis" style="left:282px;top:557px;width:130px">Add <u>C</u>olumn</div>
<div class="btn" style="left:142px;top:594px;width:130px"><u>R</u>emove Output</div>
<div class="btn dis" style="left:282px;top:594px;width:130px">Remove Col<u>u</u>mn</div>
<div class="a" style="left:16px;top:632px;width:671px;height:1px;background:#ACA899"></div>
<div class="a" style="left:16px;top:633px;width:671px;height:1px;background:#FFFFFF"></div>
<div class="btn" style="left:440px;top:647px;width:73px;height:25px;box-shadow:inset 0 1px 0 #CEE7FF,inset 0 2px 0 #BCD4F6,inset 0 -1px 0 #6982EE,inset 0 -2px 0 #A0B8F4,inset 2px 0 0 #BCD4F6,inset -2px 0 0 #A8C4F0">OK</div>
<div class="btn" style="left:527px;top:647px;width:73px;height:25px">Cancel</div>
<div class="btn" style="left:614px;top:647px;width:73px;height:25px"><u>H</u>elp</div>
<svg class="a" style="left:680px;top:665px" width="20" height="20" viewBox="0 0 20 20">
 <g fill="#fff"><rect x="16" y="9" width="2" height="2"/><rect x="12" y="13" width="2" height="2"/><rect x="16" y="13" width="2" height="2"/><rect x="8" y="17" width="2" height="2"/><rect x="12" y="17" width="2" height="2"/><rect x="16" y="17" width="2" height="2"/></g>
 <g fill="#A8A494"><rect x="15" y="8" width="2" height="2"/><rect x="11" y="12" width="2" height="2"/><rect x="15" y="12" width="2" height="2"/><rect x="7" y="16" width="2" height="2"/><rect x="11" y="16" width="2" height="2"/><rect x="15" y="16" width="2" height="2"/></g>
</svg>

</body></html>
